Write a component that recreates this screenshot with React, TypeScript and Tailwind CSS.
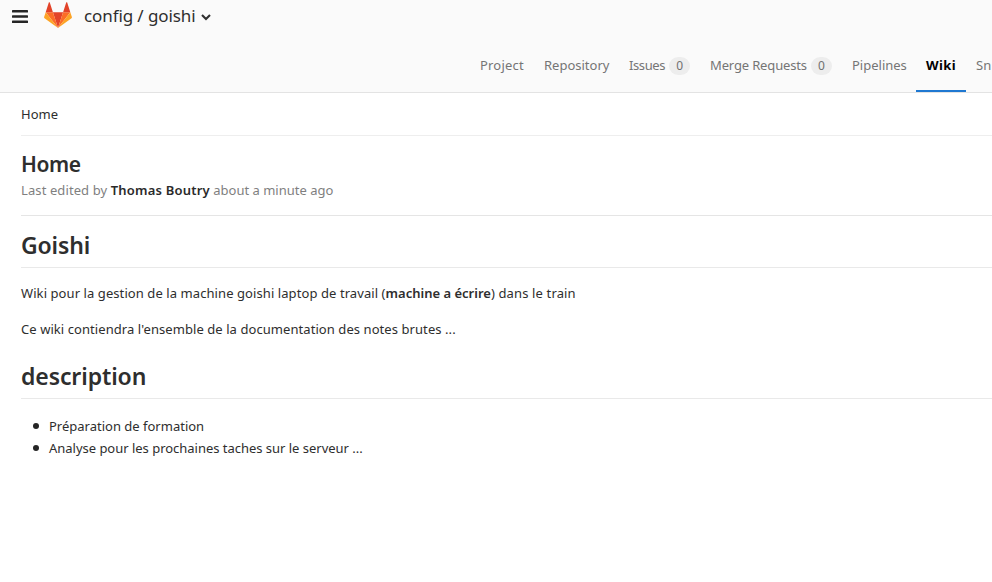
import React from "react";

function Badge() {
  return (
    <span className="ml-1 flex h-[18px] w-[21px] shrink-0 items-center justify-center rounded-full bg-[#ededed] text-[12px] tracking-normal text-[#707070]">
      0
    </span>
  );
}

function Tab({ label, className, textClass = "", badge }: { label: string; className: string; textClass?: string; badge?: boolean }) {
  return (
    <li className={`flex h-[53px] shrink-0 items-center px-2.5 ${className}`}>
      <span className={`shrink-0 ${textClass}`}>{label}</span>
      {badge && <Badge />}
    </li>
  );
}

function GitLabLogo() {
  return (
    <svg className="ml-4 h-[27px] w-7 shrink-0" viewBox="0 0 28 27" aria-hidden="true">
      <path fill="#e24329" d="M14 26 8.9 10.2h10.2z" />
      <path fill="#fc6d26" d="M14 26 8.9 10.2H1.7zM14 26l5.1-15.8h7.2z" />
      <path fill="#fca326" d="M1.7 10.2.1 15c-.1.4 0 .9.4 1.2L14 26zM26.3 10.2l1.6 4.8c.1.4 0 .9-.4 1.2L14 26z" />
      <path fill="#e24329" d="M1.7 10.2h7.2L5.8.6c-.2-.5-.9-.5-1 0zM26.3 10.2h-7.2L22.2.6c.2-.5.9-.5 1 0z" />
    </svg>
  );
}

export default function App() {
  return (
    <div className="h-[582px] w-[992px] overflow-hidden bg-white font-['Noto_Sans',sans-serif] text-[13px] whitespace-nowrap text-[#2e2e2e]">
      <header className="h-[93px] border-b border-[#e3e3e3] bg-[#fafafa]">
        <div className="flex h-[39px] items-start pl-3">
          <svg className="mt-[10px] h-[13px] w-4 shrink-0" viewBox="0 0 16 13" fill="#252525" aria-label="Menu">
            <rect width="16" height="2.6" rx=".6" />
            <rect y="5.2" width="16" height="2.6" rx=".6" />
            <rect y="10.4" width="16" height="2.6" rx=".6" />
          </svg>
          <div className="pt-[2px]">
            <GitLabLogo />
          </div>
          <h1 className="ml-3 flex h-8 w-[117px] items-center text-[17px] tracking-[-0.1px]">config / goishi</h1>
          <svg className="mt-[14px] h-[7px] w-[10px] shrink-0" viewBox="0 0 10 7" fill="none" stroke="#303030" strokeWidth="2.1" aria-hidden="true">
            <path d="m1 1.1 4 4 4-4" />
          </svg>
        </div>
        <nav>
          <ul className="flex pl-[470px] text-[#757575]">
            <Tab label="Project" className="w-16 pt-px" textClass="tracking-[0.2px]" />
            <Tab label="Repository" className="w-[85px] pt-px" />
            <Tab label="Issues" className="w-[81px] pt-px" textClass="tracking-[-0.4px]" badge />
            <Tab label="Merge Requests" className="w-[142px] pt-px" textClass="tracking-[-0.15px]" badge />
            <Tab label="Pipelines" className="w-[74px] pt-px" />
            <Tab label="Wiki" className="w-[50px] border-b-2 border-[#1f78d1] pt-[3px] font-bold text-black" textClass="tracking-[0.4px]" />
            <Tab label="Sn" className="w-[50px] pt-px" />
          </ul>
        </nav>
      </header>
      <main className="pl-[21px]">
        <div className="flex h-[43px] items-center border-b border-[#eee] pt-px">Home</div>
        <section className="h-20 border-b border-[#e5e5e5] pt-[14px]">
          <h2 className="text-[21px] leading-[28px] font-semibold tracking-[-0.4px]">Home</h2>
          <p className="leading-[24px] text-[#7f7f7f]">
            <span className="tracking-[0.1px]">Last edited by </span>
            <strong className="font-semibold tracking-[0.2px] text-[#2a2a2a]">Thomas Boutry</strong> about a minute ago
          </p>
        </section>
        <article>
          <h2 className="h-[52px] border-b border-[#e9e9e9] pt-[13px] text-[23px] leading-[32px] font-semibold tracking-[-0.15px]">Goishi</h2>
          <p className="mt-[13px] leading-[24px] tracking-[0.08px]">
            Wiki pour la gestion de la machine goishi laptop de travail (<strong className="font-semibold tracking-normal">machine a écrire</strong><span className="tracking-[0.14px]">) dans le train</span>
          </p>
          <p className="mt-3 leading-[24px] tracking-[0.07px]">Ce wiki contiendra l'ensemble de la documentation des notes brutes ...</p>
          <h2 className="mt-5 h-[38px] border-b border-[#e9e9e9] text-[23px] leading-[30px] font-semibold tracking-[-0.1px]">description</h2>
          <ul className="mt-4 pl-3 leading-[22px]">
            <li className="flex items-center gap-2.5"><span className="size-[6px] rounded-full bg-[#252525]" />Préparation de formation</li>
            <li className="flex items-center gap-2.5 tracking-[-0.02px]"><span className="size-[6px] rounded-full bg-[#252525]" />Analyse pour les prochaines taches sur le serveur ...</li>
          </ul>
        </article>
      </main>
    </div>
  );
}
